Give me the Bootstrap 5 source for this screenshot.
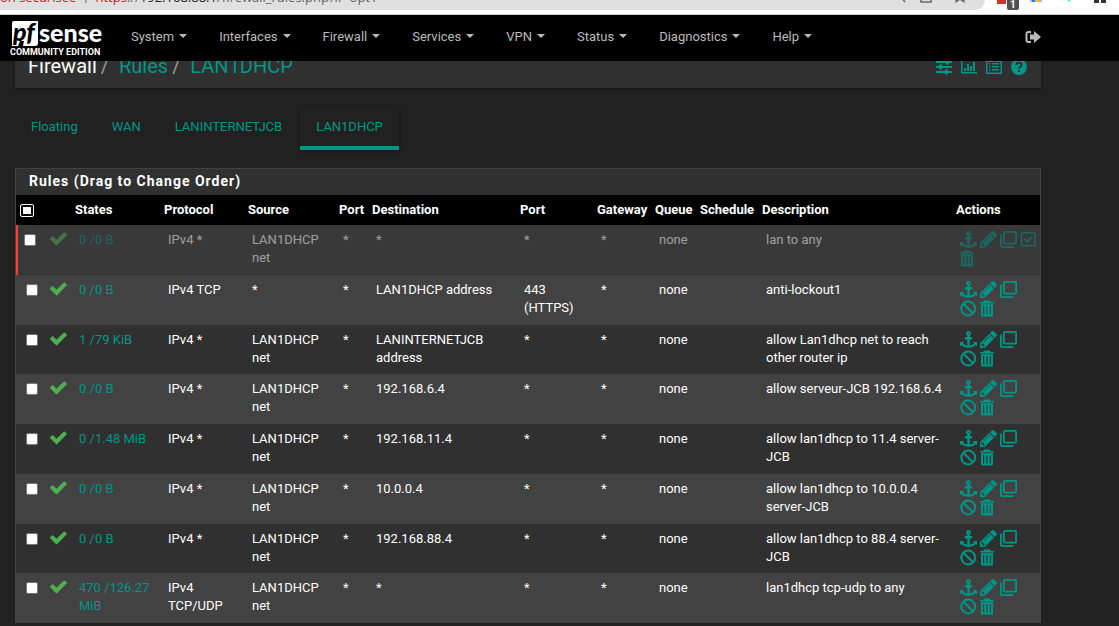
<!DOCTYPE html>
<html lang="en">
<head>
<meta charset="utf-8">
<meta name="viewport" content="width=device-width, initial-scale=1">
<title>Firewall: Rules: LAN1DHCP</title>
<link href="https://cdn.jsdelivr.net/npm/bootstrap@5.3.0/dist/css/bootstrap.min.css" rel="stylesheet">
<style>
:root{--teal:#009688}
body{background:#212121;color:#fff;font-family:Roboto,"Liberation Sans",sans-serif;font-size:13px;line-height:18px}
a{color:var(--teal);text-decoration:none}
a:hover{color:#26b5a6}
.ico{width:16px;height:16px;fill:currentColor;display:block}
.browser-strip{height:15px;background:#fff;border-bottom:1px solid #cfd4d0;overflow:hidden}
.omnibox{height:10px;width:88%;background:#e0e0e0;border-bottom-right-radius:10px;font-size:13px;line-height:16px;white-space:nowrap;color:#5f6368}
.omnibox>span{margin-bottom:5px}
.omnibox .address{font-family:"Open Sans",sans-serif}
.omnibox .alert-text{color:#c5221f}
.topnav{background:#000;height:46px;padding:0 78px 2px 10px}
.brand-logo{width:96px;height:40px;margin-right:9px}
.topnav .nav-link{color:#bbb;padding:13px 16px;line-height:18px}
.topnav .dropdown-toggle::after{margin-left:5px;vertical-align:3px;border-top-width:4px;border-left-width:4px;border-right-width:4px}
.logout{background:none;border:0;color:#bbb;padding:0}
.page-wrap{padding:0 78px 0 15px}
.title-bar{height:27px;background:#303030;padding:0 14px 0 13px;overflow:hidden;box-shadow:0 1px 2px rgba(0,0,0,.5)}
.title-bar h1{font-size:20px;line-height:24px;font-weight:400;padding-bottom:10px}
.title-bar .sep{color:#999;margin:0 5px 0 4px}
.title-icons{gap:9px;padding-bottom:13px}
.rule-tabs{padding-top:18px;margin-bottom:18px}
.rule-tabs .nav-link{color:var(--teal);padding:12px 16px 10px;line-height:18px;border-bottom:4px solid transparent;border-radius:0;margin-right:2px}
.rule-tabs .nav-link.active{border-bottom-color:var(--teal);box-shadow:0 1px 4px rgba(0,0,0,.4)}
.rules-panel{border:1px solid #424242;border-bottom:0}
.rules-panel h2{background:#303030;font-size:14px;line-height:18px;font-weight:700;letter-spacing:1px;padding:3px 13px 5px}
.rules-table{width:100%;table-layout:fixed}
.rules-table th{background:#000;height:30px;padding:0 0 0 4px;white-space:nowrap;font-weight:700}
.rules-table td{vertical-align:top;padding:5px 0 6px 8px}
.rules-table tbody tr{height:50px;background:#303030}
.rules-table tbody tr:nth-child(4n+3){height:49px}
.rules-table tbody tr:nth-child(even){background:#424242}
.rules-table tbody tr.off{background:#393939;box-shadow:inset 2px 0 #f44336,inset 0 -1px #303030}
.off td>*{opacity:.5}
.off td:first-child>*{opacity:1}
.rules-table td:first-child{padding:9px 0 0 10px}
.rules-table .off td:first-child{padding-left:8px}
.rules-table td:nth-child(2) .ico{width:17px;height:17px;color:#4caf50}
.rule-check{appearance:none;width:12px;height:12px;background:#fff;border:1px solid #767676;border-radius:2px;display:block;margin:0}
.rule-check:checked{background:var(--teal)}
.all-box{background:#000;border:1px solid #fff;border-radius:2px;width:14px;height:13px;padding:2px;display:block}
.all-box::before{content:"";display:block;width:8px;height:7px;background:#fff}
.rules-table td:last-child{padding-bottom:5px}
.acts{gap:3px;height:19px;padding-top:1px}
.acts .ico{width:17px;height:17px}
.cell-text{padding-top:1px}
</style>
</head>
<body>
<svg class="d-none" xmlns="http://www.w3.org/2000/svg">
<symbol id="anchor" viewBox="0 0 1792 1792"><path d="M960 256q0-26-19-45t-45-19-45 19-19 45 19 45 45 19 45-19 19-45zm832 928v352q0 22-20 30-8 2-12 2-12 0-23-9l-93-93q-119 143-318.5 226.5t-429.5 83.5-429.5-83.5-318.5-226.5l-93 93q-9 9-23 9-4 0-12-2-20-8-20-30v-352q0-14 9-23t23-9h352q22 0 30 20 8 19-7 35l-100 100q67 91 189.5 153.5t271.5 82.5v-647h-192q-26 0-45-19t-19-45v-128q0-26 19-45t45-19h192v-163q-58-34-93-92.5t-35-128.5q0-106 75-181t181-75 181 75 75 181q0 70-35 128.5t-93 92.5v163h192q26 0 45 19t19 45v128q0 26-19 45t-45 19h-192v647q149-20 271.5-82.5t189.5-153.5l-100-100q-15-16-7-35 8-20 30-20h352q14 0 23 9t9 23z"/></symbol>
<symbol id="pencil" viewBox="150 150 1500 1500"><path d="M491 1536l91-91-235-235-91 91v107h128v128h107zm523-928q0-22-22-22-10 0-17 7l-542 542q-7 7-7 17 0 22 22 22 10 0 17-7l542-542q7-7 7-17zm-54-192l416 416-832 832h-416v-416zm683 96q0 53-37 90l-166 166-416-416 166-165q36-38 90-38 53 0 91 38l235 234q37 39 37 91z"/></symbol>
<symbol id="clone" viewBox="0 0 17 17"><path fill-rule="evenodd" d="M5 0h10q2 0 2 2v9.500q0 2-2 2H5q-2 0-2-2V2Q3 0 5 0zM4.800 1.800v10h10.400v-10zM0 4.500Q0 3 1.800 3v12.200H14Q14 17 12.500 17H2q-2 0-2-2z"/></symbol>
<symbol id="checksq" viewBox="0 0 17 17"><g fill="none" stroke="currentColor" stroke-width="1.500"><rect x="1.500" y="1.800" width="13.500" height="13" rx="1"/><path d="M4.500 8l2.700 2.700L12 5.800" stroke-width="1.800"/></g></symbol>
<symbol id="ban" viewBox="0 0 17 17"><g fill="none" stroke="currentColor" stroke-width="2"><circle cx="8.200" cy="8.500" r="6.900"/><path d="M3.400 3.700l9.600 9.600"/></g></symbol>
<symbol id="trash" viewBox="1 0 17 17"><path fill-rule="evenodd" d="M5 .5h6l.7 1.500H15v1.500H1V2h3.300zM2 4.300h12v11q0 1.200-1.200 1.200H3.200Q2 16.500 2 15.300zM4 6v8.500h1.200V6zm3.400 0v8.500h1.200V6zm3.400 0v8.500H12V6z"/></symbol>
<symbol id="check" viewBox="110 250 1572 1300"><path d="M1671 566q0 40-28 68l-724 724-136 136q-28 28-68 28t-68-28l-136-136-362-362q-28-28-28-68t28-68l136-136q28-28 68-28t68 28l294 295 656-657q28-28 68-28t68 28l136 136q28 28 28 68z"/></symbol>
</svg>

<div class="browser-strip d-flex align-items-start">
  <div class="omnibox d-flex align-items-end flex-shrink-0">
    <span class="alert-text address">on sécurisée</span><span class="px-2">|</span>
    <span class="address"><span class="alert-text">https</span>://<span class="text-dark">192.168.88.1</span>/firewall_rules.php?if=opt1</span>
    <svg class="ms-auto me-2" width="76" height="10" viewBox="0 0 76 10" fill="none" stroke="#666" stroke-width="1.500"><path d="M0-3l4 5M20-3v5h10v-5"/><path d="M54 3l1-5h8l1 5-5-3z" fill="#666" stroke="none"/></svg>
  </div>
  <svg width="125" height="11" viewBox="0 0 125 11"><path fill="#d93025" d="M12 0h9v4h-9z"/><rect x="22" y="-3" width="12" height="13" rx="2" fill="#505050"/><text x="25" y="8" font-size="10" font-weight="700" fill="#fff">1</text><path fill="#bbb" d="M45 0h12v2H45z"/><path fill="#2878eb" d="M47 0h3v2h-3z"/><path fill="#fbbc04" d="M51 0h4v2h-4z"/><path fill="#4de1f5" d="M82 0h4l-2 2z"/><path fill="#333" d="M109 0h5v3h-5zM116 0h5v3h-5z"/></svg>
</div>

<nav class="topnav d-flex align-items-center">
  <a href="#" aria-label="pfSense Community Edition"><svg class="brand-logo d-block" viewBox="0 0 96 40">
    <path fill="#fff" d="M4 4h24v22q0 3-3 3H13l1-5h-4l-2 5H2V6q0-2 2-2z"/>
    <text x="3" y="24" font-family="Lato" font-size="25" font-weight="900" font-style="italic" fill="#000">pf</text>
    <text x="29" y="25" font-family="Lato" font-size="25" font-weight="900" fill="#fff">sense</text>
    <text x="0" y="38" font-family="Roboto" font-size="9" font-weight="700" fill="#fff">COMMUNITY EDITION</text>
  </svg></a>
  <ul class="nav flex-nowrap">
    <li><a class="nav-link dropdown-toggle" href="#">System</a></li>
    <li><a class="nav-link dropdown-toggle" href="#">Interfaces</a></li>
    <li><a class="nav-link dropdown-toggle" href="#">Firewall</a></li>
    <li><a class="nav-link dropdown-toggle" href="#">Services</a></li>
    <li><a class="nav-link dropdown-toggle" href="#">VPN</a></li>
    <li><a class="nav-link dropdown-toggle" href="#">Status</a></li>
    <li><a class="nav-link dropdown-toggle" href="#">Diagnostics</a></li>
    <li><a class="nav-link dropdown-toggle" href="#">Help</a></li>
  </ul>
  <button class="logout ms-auto" type="button" aria-label="Log out"><svg class="ico" viewBox="0 0 16 16"><path d="M6 2v2H3.500Q2.500 4 2.500 5v6q0 1 1 1H6v2H3.500Q.5 14 .5 11V5q0-3 3-3zM9 2l7 6-7 6v-3.500H5v-5h4z"/></svg></button>
</nav>

<main class="page-wrap">
  <header class="title-bar d-flex align-items-end justify-content-between">
    <h1 class="m-0">Firewall<span class="sep">/</span> <a href="#">Rules</a><span class="sep">/</span> <a href="#">LAN1DHCP</a></h1>
    <div class="title-icons d-flex">
      <a href="#" aria-label="Advanced"><svg class="ico" viewBox="0 0 16 16"><path d="M0 2h10V.5h3V2h3v2h-3v1.500h-3V4H0zM0 7h3V5.500h3V7h10v2H6v1.500H3V9H0zM0 12h9v-1.500h3V12h4v2h-4v1.500H9V14H0z"/></svg></a>
      <a href="#" aria-label="Status"><svg class="ico" viewBox="0 0 16 16"><path d="M0 1h1.500v12H16v1.500H0zM3 9h2v3H3zM6 5h2v7H6zM9 7h2v5H9zM12 3h2v9h-2z"/></svg></a>
      <a href="#" aria-label="Log"><svg class="ico" viewBox="0 0 16 16"><path fill-rule="evenodd" d="M1 1h14q1 0 1 1v12q0 1-1 1H1q-1 0-1-1V2q0-1 1-1zm.5 2v10.500h13V3zM3 4h1.500v1.500H3zM6 4h7v1.500H6zM3 7h1.500v1.500H3zM6 7h7v1.500H6zM3 10h1.500v1.500H3zM6 10h7v1.500H6z"/></svg></a>
      <a href="#" aria-label="Help"><svg class="ico" viewBox="0 0 16 16"><circle cx="8" cy="8" r="8"/><path d="M5.400 6q0-2.300 2.600-2.300T10.600 6q0 1.200-1.300 1.900T8 9.700M8 11v2" fill="none" stroke="#303030" stroke-width="2"/></svg></a>
    </div>
  </header>

  <ul class="nav rule-tabs">
    <li><a class="nav-link" href="#">Floating</a></li>
    <li><a class="nav-link" href="#">WAN</a></li>
    <li><a class="nav-link" href="#">LANINTERNETJCB</a></li>
    <li><a class="nav-link active" href="#" aria-current="page">LAN1DHCP</a></li>
  </ul>

  <section class="rules-panel">
    <h2 class="m-0">Rules (Drag to Change Order)</h2>
    <table class="rules-table">
      <colgroup><col width="26"><col width="29"><col width="89"><col width="84"><col width="91"><col width="33"><col width="148"><col width="77"><col width="58"><col width="45"><col width="62"><col><col width="88"></colgroup>
      <thead><tr><th><button class="all-box" type="button" aria-label="Toggle all"></button></th><th></th><th>States</th><th>Protocol</th><th>Source</th><th>Port</th><th>Destination</th><th>Port</th><th>Gateway</th><th>Queue</th><th>Schedule</th><th>Description</th><th>Actions</th></tr></thead>
      <tbody id="rules"></tbody>
    </table>
  </section>
</main>

<script src="https://cdn.jsdelivr.net/npm/bootstrap@5.3.0/dist/js/bootstrap.bundle.min.js"></script>
<script>
const NET = 'LAN1DHCP net';
// states, protocol, source, destination, destination port, description, enabled
const rules = [
  ['0 /0 B', 'IPv4 *', NET, '*', '*', 'lan to any', false],
  ['0 /0 B', 'IPv4 TCP', '*', 'LAN1DHCP address', '443 (HTTPS)', 'anti-lockout1', true],
  ['1 /79 KiB', 'IPv4 *', NET, 'LANINTERNETJCB address', '*', 'allow Lan1dhcp net to reach other router ip', true],
  ['0 /0 B', 'IPv4 *', NET, '192.168.6.4', '*', 'allow serveur-JCB 192.168.6.4', true],
  ['0 /1.48 MiB', 'IPv4 *', NET, '192.168.11.4', '*', 'allow lan1dhcp to 11.4 server-JCB', true],
  ['0 /0 B', 'IPv4 *', NET, '10.0.0.4', '*', 'allow lan1dhcp to 10.0.0.4 server-JCB', true],
  ['0 /0 B', 'IPv4 *', NET, '192.168.88.4', '*', 'allow lan1dhcp to 88.4 server-JCB', true],
  ['470 /126.27 MiB', 'IPv4 TCP/UDP', NET, '*', '*', 'lan1dhcp tcp-udp to any', true]
];
const link = n => `<a href="#" aria-label="${n}"><svg class="ico"><use href="#${n}"/></svg></a>`;
const line = names => `<div class="acts d-flex">${names.map(link).join('')}</div>`;
const cell = (t, pad = 'pe-3') => `<td class="${pad}"><div class="cell-text">${t}</div></td>`;
document.getElementById('rules').innerHTML = rules.map(([st, proto, src, dst, port, desc, on], i) => `
<tr class="${on ? '' : 'off'}">
  <td><input class="rule-check" type="checkbox" aria-label="Select rule ${i + 1}"></td>
  <td><svg class="ico"><use href="#check"/></svg></td>
  ${cell(`<a href="#">${st}</a>`, '')}${cell(proto)}${cell(src)}${cell('*', '')}${cell(dst)}${cell(port)}${cell('*')}${cell('none', '')}<td></td>${cell(desc, '')}
  <td>${on ? line(['anchor', 'pencil', 'clone']) + line(['ban', 'trash']) : line(['anchor', 'pencil', 'clone', 'checksq']) + line(['trash'])}</td>
</tr>`).join('');
</script>
</body>
</html>
